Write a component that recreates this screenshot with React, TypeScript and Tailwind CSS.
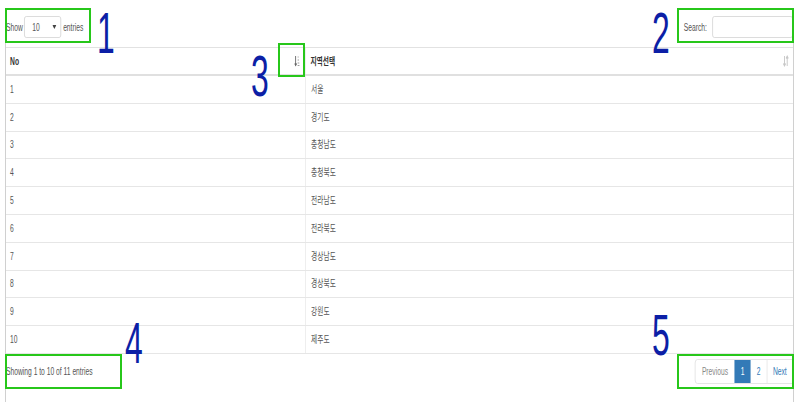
import React from 'react';

const rows = ['서울', '경기도', '충청남도', '충청북도', '전라남도', '전라북도', '경상남도', '경상북도', '강원도', '제주도'];

function SortAsc() {
  return (
    <svg width="8" height="12" viewBox="0 0 8 12" className="shrink-0">
      <path d="M2 1v9M0.5 8.5L2 10.5 3.5 8.5" stroke="#666" strokeWidth="1.3" fill="none" />
      <path d="M5 2h1.5M5 5h2M5 8h2.6M5 10.5h3" stroke="#888" strokeWidth="1" fill="none" />
    </svg>
  );
}

function SortBoth() {
  return (
    <svg width="9" height="12" viewBox="0 0 9 12" className="shrink-0">
      <path d="M2.5 1v9.5M0.8 8.5L2.5 10.8 4.2 8.5" stroke="#c8c8c8" strokeWidth="1.4" fill="none" />
      <path d="M6.5 11V1.5M4.8 3.5L6.5 1.2 8.2 3.5" stroke="#c8c8c8" strokeWidth="1.4" fill="none" />
    </svg>
  );
}

function Mark({ n, className }: { n: string; className: string }) {
  return (
    <span
      className={`absolute inline-block origin-top-left scale-x-[0.55] text-[58px] leading-none text-[#0c1fa6] font-['Liberation_Sans',Arial,sans-serif] ${className}`}
    >
      {n}
    </span>
  );
}

export default function App() {
  return (
    <div className="relative h-[411px] w-[800px] overflow-hidden bg-white font-['Liberation_Sans','Noto_Sans_CJK_KR',Arial,sans-serif] text-[10px] text-[#555]">
      <div className="ml-[5px] mt-[10px] h-[392px] w-[789px] border-x border-[#d0d0d0]">
        <div className="w-[1171px] origin-top-left scale-x-[0.672]">
          {/* top controls */}
          <div className="flex h-[37px] items-center justify-between pb-[3px]">
            <div className="flex items-center">
              <span>Show</span>
              <div className="ml-[2px] flex h-[22px] w-[55px] items-center justify-between rounded-[3px] border border-[#d5d5d5] pl-[11px] pr-[6px]">
                <span>10</span>
                <svg width="6" height="4" viewBox="0 0 6 4">
                  <path d="M0 0h6L3 4z" fill="#444" />
                </svg>
              </div>
              <span className="ml-[3px]">entries</span>
            </div>
            <div className="flex items-center">
              <span>Search:</span>
              <div className="ml-[8px] h-[22px] w-[120px] rounded-[3px] border border-[#d5d5d5]" />
            </div>
          </div>

          {/* table */}
          <div className="border-t border-[#e2e2e2]">
            <div className="flex h-[28px] border-b-2 border-[#e0e0e0] font-bold text-[#333]">
              <div className="flex w-[445px] items-center justify-between pl-[6px] pr-[8px]">
                <span>No</span>
                <SortAsc />
              </div>
              <div className="flex flex-1 items-center justify-between border-l border-[#e6e6e6] pl-[7px] pr-[6px]">
                <span>지역선택</span>
                <SortBoth />
              </div>
            </div>
            {rows.map((r, i) => (
              <div key={r} className="flex h-[27.8px] border-b border-[#e6e6e6]">
                <div className="flex w-[445px] items-center pl-[6px]">{i + 1}</div>
                <div className="flex flex-1 items-center border-l border-[#e6e6e6] pl-[8px]">{r}</div>
              </div>
            ))}
          </div>

          {/* bottom info + pagination */}
          <div className="flex h-[36px] items-center justify-between">
            <span>Showing 1 to 10 of 11 entries</span>
            <div className="flex h-[25px] overflow-hidden rounded-l-[4px] border border-[#e0e0e0]">
              <div className="flex w-[58px] items-center justify-center text-[#888]">Previous</div>
              <div className="flex w-[24px] items-center justify-center bg-[#337ab7] text-white">1</div>
              <div className="flex w-[25px] items-center justify-center border-r border-[#e0e0e0] text-[#337ab7]">2</div>
              <div className="flex w-[37px] items-center justify-center text-[#337ab7]">Next</div>
            </div>
          </div>
        </div>
      </div>

      {/* annotation boxes */}
      <div className="absolute left-[5px] top-[8px] h-[35px] w-[86px] border-2 border-[#27c71a]" />
      <div className="absolute left-[677px] top-[8px] h-[35px] w-[117px] border-2 border-[#27c71a]" />
      <div className="absolute left-[278px] top-[43px] h-[34px] w-[27px] border-2 border-[#27c71a]" />
      <div className="absolute left-[5px] top-[354px] h-[35px] w-[117px] border-2 border-[#27c71a]" />
      <div className="absolute left-[677px] top-[354px] h-[35px] w-[117px] border-2 border-[#27c71a]" />

      <Mark n="1" className="left-[97px] top-[4px]" />
      <Mark n="2" className="left-[652px] top-[4px]" />
      <Mark n="3" className="left-[251px] top-[47px]" />
      <Mark n="4" className="left-[125px] top-[314px]" />
      <Mark n="5" className="left-[652px] top-[306px]" />
    </div>
  );
}
